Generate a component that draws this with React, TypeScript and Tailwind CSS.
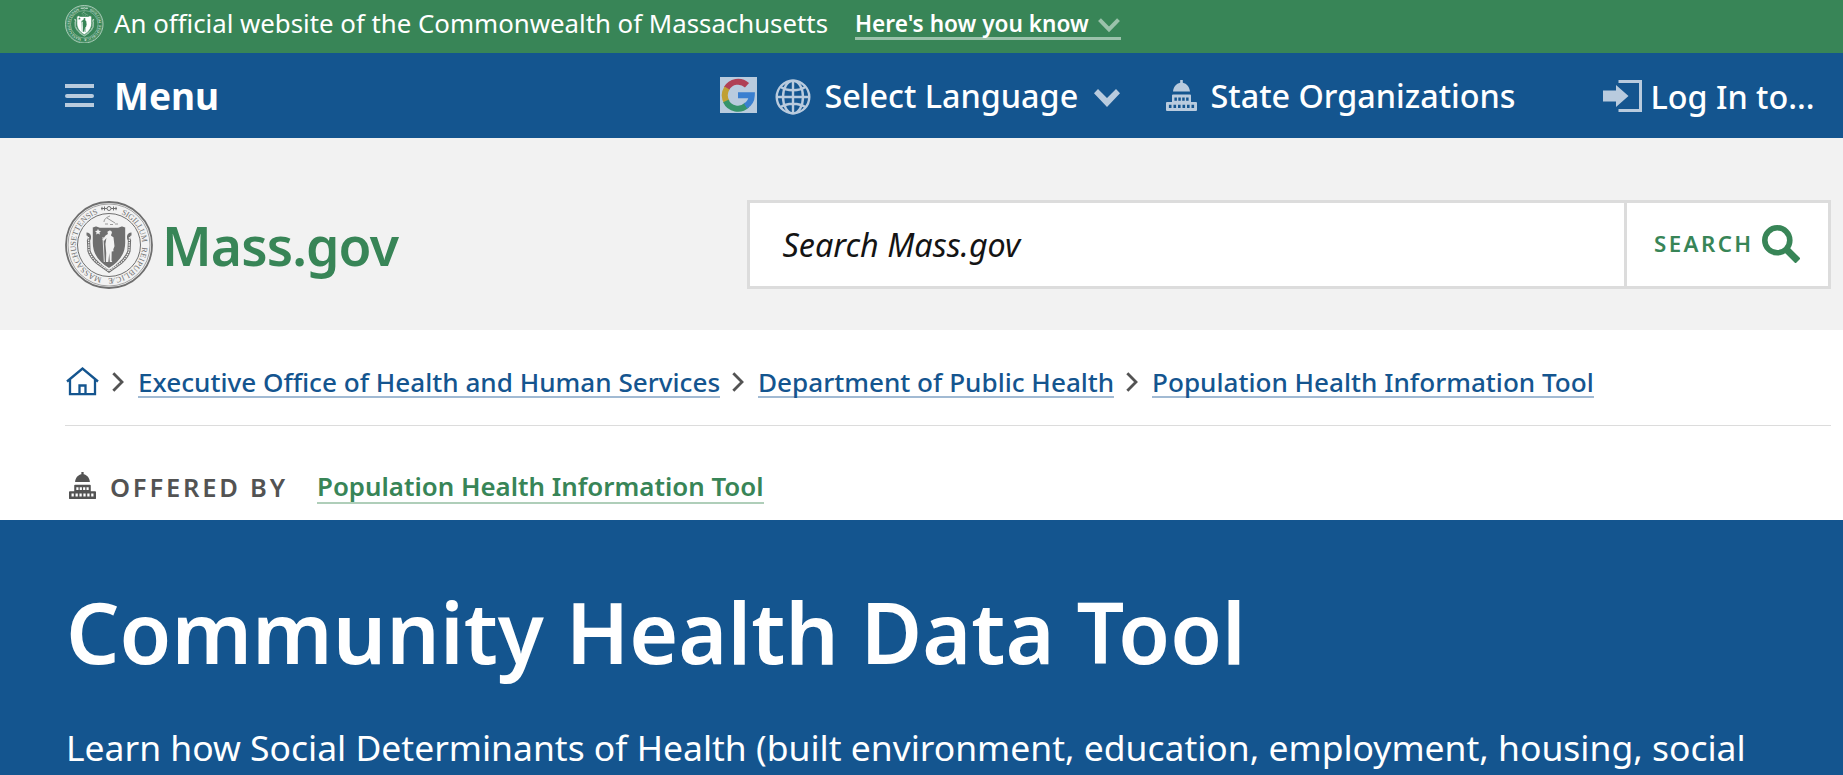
import React from "react";

function Seal({ className, mono }: { className: string; mono?: boolean }) {
  const c = mono ? "#ffffff" : "#6f6f6f";
  const bg = mono ? "#388557" : "#f2f2f2";
  const fine = mono ? "#c3dbcd" : "#6f6f6f";
  return (
    <svg className={className} viewBox="0 0 88 88" fill="none" aria-hidden="true">
      <defs>
        <path id={mono ? "ringA" : "ringB"} d="M44 10.8 A33.2 33.2 0 0 1 44 77.2 A33.2 33.2 0 0 1 44 10.8" />
      </defs>
      <circle cx="44" cy="44" r="43" stroke={fine} strokeWidth="1.8" />
      <circle cx="44" cy="44" r="41" stroke={fine} strokeWidth="0.6" />
      <circle cx="44" cy="44" r="31.5" stroke={fine} strokeWidth="1" />
      <g fill={c} fontFamily="'Liberation Serif', serif" fontSize="8" fontWeight="400">
        <text textLength="37">
          <textPath href={mono ? "#ringA" : "#ringB"} startOffset="12.5" textLength="37">SIGILLUM</textPath>
        </text>
        <text textLength="51">
          <textPath href={mono ? "#ringA" : "#ringB"} startOffset="54" textLength="51">REIPUBLICÆ</textPath>
        </text>
        <text textLength="86">
          <textPath href={mono ? "#ringA" : "#ringB"} startOffset="111" textLength="86">MASSACHUSETTENSIS</textPath>
        </text>
      </g>
      <path d="M36 7.5h16M37 5.8v3.4M39.5 5.5v4M48.5 5.5v4M51 5.8v3.4" stroke={c} strokeWidth="1" />
      <circle cx="44" cy="7.5" r="2" stroke={c} strokeWidth="1" fill={bg} />
      <path d="M39 21c0-3 3-5 6-6M42 17l8 5M40 23h3M45 23.5h3M50 23h3" stroke={c} strokeWidth="0.9" opacity="0.75" />
      <path d="M21.500 33c3.500 0 3.500 4 2 6.500l.5 10.500c2 6 6 10 10 13l10 7 10-7c4-3 8-7 10-13l.5-10.500c-1.500-2.500-1.500-6.500 2-6.500" stroke={fine} strokeWidth="3.200" />
      <path d="M23.500 36l.5 14c2 6 6 10 10 13l10 7 10-7c4-3 8-7 10-13l.5-14" stroke={bg} strokeWidth="1.300" strokeDasharray="1.500 0.900" />
      <path d="M27 26l4-1.500 4 1.500h18l4-1.500 4 1.500v16c0 11-7 20-17 26-10-6-17-15-17-26z" fill={c} stroke={bg} strokeWidth="1.600" />
      <path d="M33 27.800l.9 2 2.100.2-1.600 1.400.5 2.200-1.900-1.100-1.900 1.100.5-2.200-1.600-1.400 2.100-.2z" fill={bg} />
      <path d="M44.500 29.500a2.100 2.100 0 0 1 1.800 3.500l-.2 1.700 2.400 1.600 1 9-1.200 3 .2 2-1.800.2-.2 9 .8 1.500h-2.500l-.5-9-1 9h-2.300l.2-9-.8-9 1-6-2.400 3-1.600-1.300 3.200-4.200 2.300-1.500-.5-2.200z" fill={bg} />
      <path d="M38 36l1.300 25" stroke={bg} strokeWidth="0.900" />
    </svg>
  );
}

function Chevron({ className }: { className: string }) {
  return (
    <svg className={className} viewBox="0 0 26 18" fill="currentColor" aria-hidden="true">
      <path d="M4 0l9 9 9-9 4 4.200L13 18 0 4.200z" />
    </svg>
  );
}

function ChevronThin({ className }: { className: string }) {
  return (
    <svg className={className} viewBox="0 0 22 15" fill="none" stroke="currentColor" strokeWidth="4" aria-hidden="true">
      <path d="M1.500 1.700L11 11.500 20.500 1.700" />
    </svg>
  );
}

function Crumb() {
  return (
    <svg className="h-5 w-3 shrink-0 text-[#535353]" viewBox="0 0 12 20" fill="none" stroke="currentColor" strokeWidth="2.8" aria-hidden="true">
      <path d="M1.300 1.200L10 10 1.300 18.800" />
    </svg>
  );
}

function Capitol({ className }: { className: string }) {
  return (
    <svg className={className} viewBox="0 0 31 31" fill="currentColor" aria-hidden="true">
      <path d="M14.200 0h2.600v2.700c4 .8 6.900 4.300 7.200 8.800H7c.3-4.500 3.200-8 7.200-8.800z" />
      <path fillRule="evenodd" d="M6 15.500a1 1 0 0 1 1-1h17a1 1 0 0 1 1 1V22h5a1 1 0 0 1 1 1v7a1 1 0 0 1-1 1H1a1 1 0 0 1-1-1v-7a1 1 0 0 1 1-1h5zM8.400 17.500v3.300h2.500v-3.300zm3.900 0v3.300h2.500v-3.300zm3.900 0v3.300h2.500v-3.300zm3.900 0v3.300h2.500v-3.300zM2.900 24.800v3.300h2.600v-3.300zm4.600 0v3.300h2.600v-3.300zm4.500 0v3.300h2.600v-3.300zm4.500 0v3.300h2.600v-3.300zm4.500 0v3.300h2.600v-3.300zm4.500 0v3.300h2.600v-3.300z" />
    </svg>
  );
}

function GoogleIcon() {
  return (
    <svg className="mb-px h-9 w-[37px] shrink-0" viewBox="0 0 37 36" fill="none" aria-hidden="true">
      <rect width="37" height="36" fill="#b9cbde" />
      <g strokeWidth="6">
        <path d="M27 8.200A13.200 13.200 0 0 0 6.500 11.500" stroke="#b04055" />
        <path d="M7 11A13.500 13.500 0 0 0 7 25.500" stroke="#c0a033" />
        <path d="M5.800 24A13.200 13.200 0 0 0 27 28" stroke="#36936a" />
        <path d="M18 18.300H31.800A13 13 0 0 1 25.500 29" stroke="#3a7fd0" />
      </g>
    </svg>
  );
}

function Globe() {
  return (
    <svg className="h-9 w-9 shrink-0" viewBox="0 0 36 36" fill="none" stroke="#b9cbde" strokeWidth="2.400" aria-hidden="true">
      <circle cx="18" cy="18" r="16.300" />
      <ellipse cx="18" cy="18" rx="10" ry="16.300" />
      <path d="M18 1.500v33M1.500 18h33M5 7.500c7 5 19 5 26 0M5 28.500c7-5 19-5 26 0" />
    </svg>
  );
}

const crumbLink = "h-[33px] border-b-2 border-[#a1bad3] whitespace-nowrap text-[26.12px] leading-[34px] font-medium text-[#14558f]";

export default function App() {
  return (
    <div className="flex h-[775px] w-full flex-col overflow-hidden bg-white font-['Noto_Sans',sans-serif] text-white">
      <div className="flex h-[53px] shrink-0 items-start bg-[#388557] pl-[65px]">
        <Seal mono className="mt-[4.500px] h-[38.500px] w-[38.500px] shrink-0" />
        <span className="ml-[10.500px] w-[741px] whitespace-nowrap text-[25.8px] leading-[46px]">
          An official website of the Commonwealth of Massachusetts
        </span>
        <a className="flex h-[40px] w-[266px] shrink-0 justify-between border-b-3 border-[#9bc2ab] pt-[9px] text-[22.6px] leading-[30px] font-semibold whitespace-nowrap">
          Here's how you know
          <ChevronThin className="mt-[9px] mr-px h-[15px] w-[22px] text-[#9bc2ab]" />
        </a>
      </div>

      <nav className="flex h-[85px] shrink-0 items-center bg-[#14558f] pl-[65px] text-[32.35px] leading-[85px] font-medium whitespace-nowrap">
        <div className="flex w-[655px] items-center">
          <div className="flex w-[29px] flex-col gap-[5.5px] text-[#b9cbde]">
            <i className="h-1 bg-current" />
            <i className="h-1 rounded-full bg-current" />
            <i className="h-1 bg-current" />
          </div>
          <span className="ml-[20px] text-[37px] font-bold">Menu</span>
        </div>
        <div className="flex w-[446px] items-center">
          <GoogleIcon />
          <span className="ml-[18px] flex pt-0.5"><Globe /></span>
          <span className="ml-[13.500px] w-[269.500px]">Select Language</span>
          <Chevron className="mt-1 h-[18px] w-[26px] text-[#b9cbde]" />
        </div>
        <div className="flex w-[437px] items-center">
          <Capitol className="h-[31px] w-[31px] text-[#b9cbde]" />
          <span className="ml-[13.500px]">State Organizations</span>
        </div>
        <div className="flex items-center">
          <svg className="h-8 w-[39px]" viewBox="0 0 39 32" fill="#b9cbde" aria-hidden="true">
            <path d="M0 10.500h13V5l12.500 11L13 27v-5.500H0zM15.500 0H39v32H15.500v-3H36V3H15.500z" />
          </svg>
          <span className="ml-[8.500px] pt-0.5">Log In to...</span>
        </div>
      </nav>

      <header className="flex h-[192px] shrink-0 items-start bg-[#f2f2f2] pl-[65px]">
        <Seal className="mt-[62.500px] h-[88px] w-[88px] shrink-0" />
        <div className="mt-[79px] ml-[9px] w-[585px] text-[53.500px] leading-[58px] font-semibold tracking-[-0.9px] text-[#388557]">Mass.gov</div>
        <div className="mt-[62px] flex h-[89px] w-[1084px] border-3 border-[#dcdcdc] bg-white">
          <div className="w-[874px] pl-[32.500px] text-[32.300px] leading-[83px] text-[#141414] italic">Search Mass.gov</div>
          <button className="flex flex-1 items-center border-l-3 border-[#dcdcdc] pb-px pl-[27px] text-[22.300px] font-semibold tracking-[2.400px] text-[#388557]">
            SEARCH
            <svg className="ml-[8px] h-[38px] w-[38px]" viewBox="0 0 38 38" fill="none" stroke="currentColor" aria-hidden="true">
              <circle cx="15.300" cy="15.300" r="12.500" strokeWidth="5.600" />
              <path d="M24 24l12 12" strokeWidth="7" />
            </svg>
          </button>
        </div>
      </header>

      <div className="ml-[65px] flex h-[96px] w-[1766px] shrink-0 items-start border-b border-[#dcdcdc] pt-[35px]">
        <svg className="mt-[2px] ml-px h-[29px] w-[33px] shrink-0 text-[#14558f]" viewBox="0 0 33 29" fill="none" stroke="currentColor" strokeWidth="2.300" aria-hidden="true">
          <path d="M1 14.500L16.500 1.500 32 14.500M4 12.500V27.200H29V12.500M13.500 27.500V18.500H19.500V27.500" />
        </svg>
        <div className="flex">
          <span className="mt-[7px] ml-[12.500px] flex w-[26.500px]"><Crumb /></span>
          <a className={crumbLink + " w-[582px]"}>Executive Office of Health and Human Services</a>
          <span className="mt-[7px] ml-[12px] flex w-[26px]"><Crumb /></span>
          <a className={crumbLink + " w-[356px]"}>Department of Public Health</a>
          <span className="mt-[7px] ml-[12px] flex w-[26px]"><Crumb /></span>
          <a className={crumbLink + " w-[442px]"}>Population Health Information Tool</a>
        </div>
      </div>

      <div className="ml-[69px] flex h-[94px] shrink-0 items-start">
        <Capitol className="mt-[46px] h-[27px] w-[27px] text-[#535353]" />
        <span className="mt-[43px] ml-[14px] w-[207px] text-[25.500px] leading-[36px] font-semibold tracking-[2.800px] whitespace-nowrap text-[#535353]">OFFERED BY</span>
        <a className="mt-[43px] h-[35px] w-[447px] border-b-2 border-[#afceb9] text-[25.850px] leading-[34px] font-semibold whitespace-nowrap text-[#388557]">
          Population Health Information Tool
        </a>
      </div>

      <main className="flex-1 bg-[#14558f] pl-[66px]">
        <h1 className="pt-[62px] text-[84px] leading-[100px] font-semibold whitespace-nowrap">Community Health Data Tool</h1>
        <p className="mt-[40px] text-[35.480px] leading-[50px] whitespace-nowrap">
          Learn how Social Determinants of Health (built environment, education, employment, housing, social
        </p>
      </main>
    </div>
  );
}
